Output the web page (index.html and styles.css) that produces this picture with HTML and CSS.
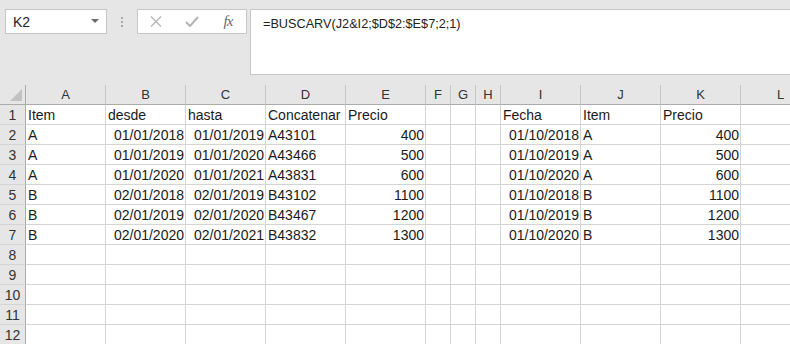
FILE: index.html
```html
<!DOCTYPE html>
<html lang="es">
<head>
  <meta charset="UTF-8">
  <meta name="viewport" content="width=device-width, initial-scale=1.0">
  <title>Hoja de cálculo</title>
  <link rel="stylesheet" href="styles.css">
</head>
<body>
  <!-- Barra de fórmulas -->
  <div class="toolbar">
    <div class="namebox">
      <span>K2</span>
      <span class="caret"></span>
    </div>
    <div class="grip"><i></i><i></i><i></i></div>
    <div class="fxbox">
      <span class="slot">
        <svg width="12" height="11" viewBox="0 0 12 11"><path d="M1 0.5 L11 10.5 M11 0.5 L1 10.5" stroke="#b4b4b4" stroke-width="1.3" fill="none"/></svg>
      </span>
      <span class="slot">
        <svg width="14" height="11" viewBox="0 0 14 11"><path d="M1 6 L5 10 L13 1" stroke="#b4b4b4" stroke-width="2" fill="none"/></svg>
      </span>
      <span class="slot fx">fx</span>
    </div>
    <div class="formula">=BUSCARV(J2&amp;I2;$D$2:$E$7;2;1)</div>
  </div>

  <!-- Cuadrícula -->
  <div class="sheet" id="sheet"></div>

  <script>
    const letters = ["A", "B", "C", "D", "E", "F", "G", "H", "I", "J", "K", "L"];
    const data = [
      ["Item", "desde", "hasta", "Concatenar", "Precio", "", "", "", "Fecha", "Item", "Precio", ""],
      ["A", "01/01/2018", "01/01/2019", "A43101", "400", "", "", "", "01/10/2018", "A", "400", ""],
      ["A", "01/01/2019", "01/01/2020", "A43466", "500", "", "", "", "01/10/2019", "A", "500", ""],
      ["A", "01/01/2020", "01/01/2021", "A43831", "600", "", "", "", "01/10/2020", "A", "600", ""],
      ["B", "02/01/2018", "02/01/2019", "B43102", "1100", "", "", "", "01/10/2018", "B", "1100", ""],
      ["B", "02/01/2019", "02/01/2020", "B43467", "1200", "", "", "", "01/10/2019", "B", "1200", ""],
      ["B", "02/01/2020", "02/01/2021", "B43832", "1300", "", "", "", "01/10/2020", "B", "1300", ""]
    ];
    const sheet = document.getElementById("sheet");

    function addCell(cls, text) {
      const el = document.createElement("div");
      el.className = cls;
      el.textContent = text;
      sheet.appendChild(el);
    }

    // Fila de encabezados
    addCell("corner", "");
    letters.forEach(l => addCell("colhead", l));

    // Filas de datos (12 visibles)
    for (let r = 0; r < 12; r++) {
      addCell("rowhead", r + 1);
      for (let c = 0; c < letters.length; c++) {
        const val = data[r] ? data[r][c] : "";
        // números y fechas a la derecha
        const num = /^[\d\/]+$/.test(val);
        addCell(num ? "cell num" : "cell", val);
      }
    }
  </script>
</body>
</html>
```

FILE: styles.css
```css
* {
  margin: 0;
  padding: 0;
  box-sizing: border-box;
}
html, body {
  height: 100%;
}
body {
  background: #e6e6e6;
  font-family: "Liberation Sans", Arial, sans-serif;
  overflow: hidden;
}

/* Barra de fórmulas */
.toolbar {
  height: 85px;
  display: flex;
  align-items: flex-start;
  padding: 9px 0 0 5px;
}
.namebox {
  width: 102px;
  height: 25px;
  background: #fff;
  border: 1px solid #c6c6c6;
  display: flex;
  align-items: center;
  justify-content: space-between;
  padding: 0 7px 0 7px;
  font-size: 14px;
  color: #222;
}
.caret {
  width: 0;
  height: 0;
  border-left: 4px solid transparent;
  border-right: 4px solid transparent;
  border-top: 4px solid #6a6a6a;
  margin-top: -2px;
}
.grip {
  width: 30px;
  height: 25px;
  display: flex;
  flex-direction: column;
  align-items: center;
  justify-content: center;
  gap: 2px;
}
.grip i {
  width: 2px;
  height: 2px;
  background: #a8a8a8;
}
.fxbox {
  width: 110px;
  height: 25px;
  background: #fff;
  border: 1px solid #c6c6c6;
  display: flex;
  align-items: center;
}
.slot {
  width: 36px;
  display: flex;
  justify-content: center;
  align-items: center;
}
.fx {
  font-family: "Liberation Serif", "Times New Roman", serif;
  font-style: italic;
  font-size: 15px;
  color: #6a6a6a;
  letter-spacing: -1px;
}
.formula {
  flex: 1;
  height: 66px;
  margin-left: 3px;
  background: #fff;
  border: 1px solid #c6c6c6;
  border-right: none;
  padding: 7px 0 0 12px;
  font-size: 12.7px;
  color: #222;
}

/* Cuadrícula */
.sheet {
  display: grid;
  grid-template-columns: 26px repeat(5, 80px) 25px 25px 25px 80px 80px 80px 80px;
  grid-auto-rows: 20px;
  width: 821px;
  background: #fff;
  font-size: 14px;
  color: #1a1a1a;
}
.corner, .colhead, .rowhead {
  background: #e6e6e6;
  color: #333;
}
.corner {
  position: relative;
  border-right: 1px solid #ababab;
  border-bottom: 1px solid #ababab;
}
.corner::after {
  content: "";
  position: absolute;
  right: 3px;
  bottom: 3px;
  width: 0;
  height: 0;
  border-left: 12px solid transparent;
  border-bottom: 12px solid #c2c2c2;
}
.colhead {
  border-right: 1px solid #c6c6c6;
  border-bottom: 1px solid #ababab;
  text-align: center;
  font-size: 13px;
  line-height: 19px;
}
.rowhead {
  border-right: 1px solid #ababab;
  border-bottom: 1px solid #d4d4d4;
  text-align: center;
  font-size: 14px;
  line-height: 20px;
}
.cell {
  border-right: 1px solid #d4d4d4;
  border-bottom: 1px solid #d4d4d4;
  padding: 0 1px 0 2px;
  line-height: 20px;
  white-space: nowrap;
  overflow: hidden;
}
.cell.num {
  text-align: right;
}
```
